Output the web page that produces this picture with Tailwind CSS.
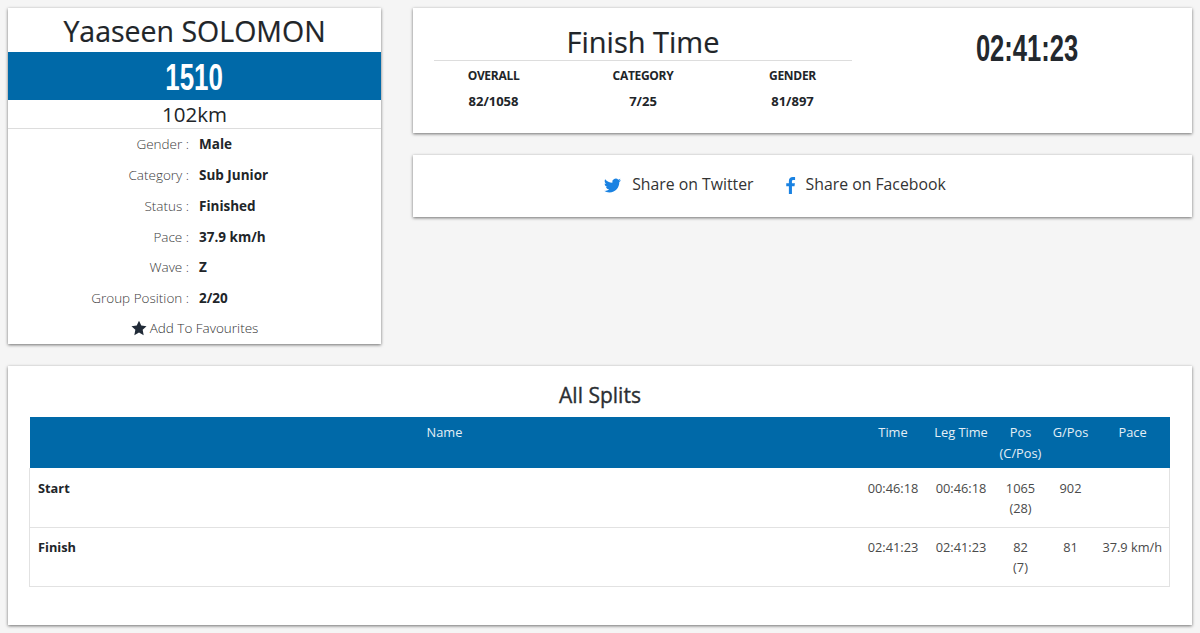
<!DOCTYPE html>
<html lang="en">
<head>
    <meta charset="UTF-8">
    <meta name="viewport" content="width=device-width, initial-scale=1.0">
    <title>Yaaseen SOLOMON - Results</title>
    <script src="https://cdn.jsdelivr.net/npm/@tailwindcss/browser@4"></script>
</head>
<body class="bg-[#f5f5f5] font-['Open_Sans',sans-serif] text-[#212529] overflow-hidden">
    <div class="p-2 h-[633px]">
        <div class="flex gap-8 items-start">
            <!-- Rider card -->
            <div class="w-[373px] h-[336px] bg-white shadow-[0_1px_3px_rgba(0,0,0,0.55)] flex flex-col">
                <h1 class="h-[44px] text-center text-[28.5px] leading-[46px] [-webkit-text-stroke:0.2px_#212529]">Yaaseen SOLOMON</h1>
                <div class="h-[48px] bg-[#0069a8] text-white text-center font-['Liberation_Sans',sans-serif] font-bold text-[36px] leading-[52px]"><span class="inline-block scale-x-[0.72]">1510</span></div>
                <div class="h-[29px] text-center text-[20.5px] leading-[28px] border-b border-[#dddddd]">102km</div>
                <dl class="text-[13.5px] leading-[20px] pt-[5px]">
                    <div class="flex h-[31px] items-start"><dt class="w-[181px] text-right text-[#3c3c3c] font-light">Gender :</dt><dd class="ml-[10px] font-bold">Male</dd></div>
                    <div class="flex h-[31px] items-start"><dt class="w-[181px] text-right text-[#3c3c3c] font-light">Category :</dt><dd class="ml-[10px] font-bold">Sub Junior</dd></div>
                    <div class="flex h-[31px] items-start"><dt class="w-[181px] text-right text-[#3c3c3c] font-light">Status :</dt><dd class="ml-[10px] font-bold">Finished</dd></div>
                    <div class="flex h-[30px] items-start"><dt class="w-[181px] text-right text-[#3c3c3c] font-light">Pace :</dt><dd class="ml-[10px] font-bold">37.9 km/h</dd></div>
                    <div class="flex h-[31px] items-start"><dt class="w-[181px] text-right text-[#3c3c3c] font-light">Wave :</dt><dd class="ml-[10px] font-bold">Z</dd></div>
                    <div class="flex h-[30px] items-start"><dt class="w-[181px] text-right text-[#3c3c3c] font-light">Group Position :</dt><dd class="ml-[10px] font-bold">2/20</dd></div>
                    <div class="flex justify-center items-center gap-[3px] h-[20px] text-[#333] font-light">
                        <svg class="w-[16px] h-[16px]" viewBox="0 0 24 24" fill="#212b38"><path d="M12 1l3.4 7.3 7.9 1-5.8 5.500 1.500 7.900L12 18.800l-7 3.900 1.500-7.900L.7 9.300l7.900-1z"/></svg>
                        <span>Add To Favourites</span>
                    </div>
                </dl>
            </div>

            <!-- Right column -->
            <div class="flex-1 flex flex-col gap-[22px]">
                <div class="h-[125px] bg-white shadow-[0_1px_3px_rgba(0,0,0,0.55)] flex">
                    <div class="w-[439px] pl-[21px] pt-[15px] shrink-0">
                        <h2 class="text-center text-[29px] leading-[38px] h-[38px] border-b border-[#dddddd] [-webkit-text-stroke:0.2px_#212529]">Finish Time</h2>
                        <div class="flex text-[12px] leading-[16px] font-bold text-center mt-[7px]">
                            <div class="w-[119px]"><div class="tracking-[-0.3px]">OVERALL</div><div class="mt-[9px] text-[13px]">82/1058</div></div>
                            <div class="w-[180px]"><div class="tracking-[-0.3px]">CATEGORY</div><div class="mt-[9px] text-[13px]">7/25</div></div>
                            <div class="w-[119px]"><div class="tracking-[-0.3px]">GENDER</div><div class="mt-[9px] text-[13px]">81/897</div></div>
                        </div>
                    </div>
                    <div class="flex-1 text-center pl-[11px] pt-[20px] font-['Liberation_Sans',sans-serif] font-bold text-[36px] leading-[42px] text-[#23282e]"><span class="inline-block scale-x-[0.71]">02:41:23</span></div>
                </div>
                <div class="h-[62px] pb-[3px] bg-white shadow-[0_1px_3px_rgba(0,0,0,0.55)] flex items-center justify-center gap-[31px] text-[15.8px] text-[#333] pr-[55px]">
                    <div class="flex items-center gap-[11px]">
                        <svg class="w-[17px] h-[17px] mt-[2px]" viewBox="0 0 24 24" fill="#1a82e2"><path d="M23.950 4.570a10 10 0 0 1-2.820.770 4.960 4.960 0 0 0 2.160-2.720 9.900 9.900 0 0 1-3.120 1.180 4.920 4.920 0 0 0-8.380 4.480C7.690 8.100 4.070 6.130 1.640 3.160a4.820 4.820 0 0 0-.670 2.480c0 1.710.870 3.210 2.190 4.100a4.900 4.900 0 0 1-2.230-.610v.060a4.920 4.920 0 0 0 3.950 4.830 5 5 0 0 1-2.210.080 4.940 4.940 0 0 0 4.600 3.420 9.870 9.870 0 0 1-6.100 2.100c-.390 0-.780-.020-1.170-.070a14 14 0 0 0 7.560 2.210c9.050 0 14-7.500 14-13.980 0-.210 0-.420-.020-.630a9.940 9.940 0 0 0 2.460-2.550z"/></svg>
                        <span>Share on Twitter</span>
                    </div>
                    <div class="flex items-center gap-[10px]">
                        <svg class="w-[11px] h-[17px] mt-[2px]" viewBox="0 0 12 20" fill="#1a82e2"><path d="M7.700 20v-9h3l.500-3.600H7.700V5.200c0-1 .300-1.700 1.800-1.700h1.900V.2C11 .1 9.900 0 8.700 0 6 0 4.100 1.700 4.100 4.700v2.700H1V11h3.100v9z"/></svg>
                        <span>Share on Facebook</span>
                    </div>
                </div>
            </div>
        </div>

        <!-- All splits -->
        <div class="mt-[22px] h-[259px] bg-white shadow-[0_1px_3px_rgba(0,0,0,0.55)] px-[21px]">
            <h2 class="text-center text-[21px] leading-[27px] pt-[16px] h-[51px] box-border text-[#2b2f33] [-webkit-text-stroke:0.35px_#2b2f33]">All Splits</h2>
            <table class="w-[1141px] table-fixed border-collapse text-[12.8px] leading-[20px] text-[#4a4a4a]">
                <thead class="bg-[#0069a8] text-[#e4eff6] leading-[21px]">
                    <tr class="h-[51px]">
                        <th class="w-[830px] font-normal align-top pt-[5px]">Name</th>
                        <th class="w-[67px] font-normal align-top pt-[5px]">Time</th>
                        <th class="w-[69px] font-normal align-top pt-[5px]">Leg Time</th>
                        <th class="w-[50px] font-normal align-top pt-[5px]">Pos<br>(C/Pos)</th>
                        <th class="w-[50px] font-normal align-top pt-[5px]">G/Pos</th>
                        <th class="font-normal align-top pt-[5px]">Pace</th>
                    </tr>
                </thead>
                <tbody class="text-center">
                    <tr class="h-[59px] border-b border-x border-[#e2e2e2]">
                        <td class="text-left pl-[8px] font-bold text-[#212529] align-top pt-[10px]">Start</td>
                        <td class="align-top pt-[10px]">00:46:18</td>
                        <td class="align-top pt-[10px]">00:46:18</td>
                        <td class="align-top pt-[10px]">1065<br>(28)</td>
                        <td class="align-top pt-[10px]">902</td>
                        <td class="align-top pt-[10px]"></td>
                    </tr>
                    <tr class="h-[59px] border-b border-x border-[#e2e2e2]">
                        <td class="text-left pl-[8px] font-bold text-[#212529] align-top pt-[9px]">Finish</td>
                        <td class="align-top pt-[9px]">02:41:23</td>
                        <td class="align-top pt-[9px]">02:41:23</td>
                        <td class="align-top pt-[9px]">82<br>(7)</td>
                        <td class="align-top pt-[9px]">81</td>
                        <td class="align-top pt-[9px]">37.9 km/h</td>
                    </tr>
                </tbody>
            </table>
        </div>
    </div>
</body>
</html>
